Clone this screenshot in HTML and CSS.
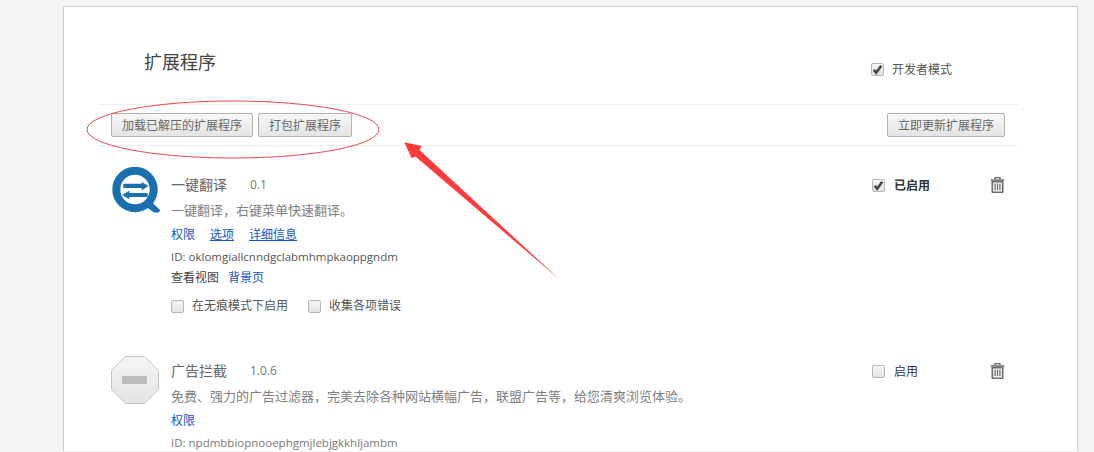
FILE: index.html
```html
<!DOCTYPE html>
<html lang="zh-CN">
<head>
<meta charset="utf-8">
<title>扩展程序</title>
<link rel="stylesheet" href="styles.css">
</head>
<body>
<main class="card">
  <header class="head">
    <h1 class="title">扩展程序</h1>
    <label class="dev"><span class="cb on"><svg viewBox="0 0 14 14"><path d="M3 7.500l2.600 3L11 3" class="tick"/></svg></span><span>开发者模式</span></label>
  </header>
  <div class="toolbar">
    <div class="btns">
      <button class="btn">加载已解压的扩展程序</button>
      <button class="btn">打包扩展程序</button>
    </div>
    <button class="btn">立即更新扩展程序</button>
  </div>
  <section class="item first">
    <svg class="icon" viewBox="0 0 48 48">
      <circle cx="23" cy="22.500" r="18.700" fill="none" stroke="#1a6fae" stroke-width="8"/>
      <path d="M30 37l6-5.500L48 43l-1 2.500h-5z" fill="#1a6fae"/>
      <path d="M11.300 16.800h18.400v-1.800l6.800 4-6.800 4.200v-2.200H11.300zM35.700 26h-18.400v-2.200l-7.200 4.200 7.200 4.200v-2.200h18.400z" fill="#1a6fae"/>
    </svg>
    <div class="info">
      <div class="name"><span class="nm">一键翻译</span><span class="ver">0.1</span></div>
      <div class="desc">一键翻译，右键菜单快速翻译。</div>
      <div class="links"><a class="lnk">权限</a><a class="lnk ul">选项</a><a class="lnk ul">详细信息</a></div>
      <div class="id">ID: oklomgiallcnndgclabmhmpkaoppgndm</div>
      <div class="view"><span>查看视图</span><a class="lnk">背景页</a></div>
      <div class="opts">
        <label class="opt"><span class="cb"></span><span>在无痕模式下启用</span></label>
        <label class="opt"><span class="cb"></span><span>收集各项错误</span></label>
      </div>
    </div>
    <div class="side">
      <label class="en"><span class="cb on"><svg viewBox="0 0 14 14"><path d="M3 7.500l2.600 3L11 3" class="tick"/></svg></span><b>已启用</b></label>
      <svg class="trash" viewBox="0 0 14 16">
        <path d="M4.500 2V1.200Q4.500.500 5.200.500h3.600q.7 0 .7.700V2M.200 3h13.600" class="tr-line"/>
        <path d="M1.800 4.600h10.400V14.500q0 .8-.8.800H2.600q-.8 0-.8-.8z" class="tr-line"/>
        <path d="M4.600 6.500v6.800M7 6.500v6.800M9.400 6.500v6.800" class="tr-bars"/>
      </svg>
    </div>
  </section>
  <section class="item">
    <svg class="icon" viewBox="0 0 48 48">
      <defs><linearGradient id="g" x1="0" y1="0" x2="0" y2="1"><stop offset="0" stop-color="#f5f5f5"/><stop offset="1" stop-color="#e3e3e3"/></linearGradient></defs>
      <path d="M14.500.500h19l14 14v19l-14 14h-19l-14-14v-19z" fill="url(#g)" stroke="#c4c4c4"/>
      <rect x="11" y="20" width="25" height="8" rx="1" fill="#bcbcbc"/>
    </svg>
    <div class="info">
      <div class="name"><span class="nm">广告拦截</span><span class="ver">1.0.6</span></div>
      <div class="desc">免费、强力的广告过滤器，完美去除各种网站横幅广告，联盟广告等，给您清爽浏览体验。</div>
      <div class="links"><a class="lnk">权限</a></div>
      <div class="id">ID: npdmbbiopnooephgmjlebjgkkhljambm</div>
    </div>
    <div class="side">
      <label class="en"><span class="cb"></span><span>启用</span></label>
      <svg class="trash" viewBox="0 0 14 16">
        <path d="M4.500 2V1.200Q4.500.500 5.200.500h3.600q.7 0 .7.700V2M.200 3h13.600" class="tr-line"/>
        <path d="M1.800 4.600h10.400V14.500q0 .8-.8.800H2.600q-.8 0-.8-.8z" class="tr-line"/>
        <path d="M4.600 6.500v6.800M7 6.500v6.800M9.400 6.500v6.800" class="tr-bars"/>
      </svg>
    </div>
  </section>
</main>
<svg class="marks" viewBox="0 0 1094 452">
  <ellipse cx="233" cy="129.500" rx="146" ry="28.500" fill="none" stroke="#f0474c" stroke-width="1"/>
  <path d="M404.300 142.300L421.700 146 419.500 150 559 279 415.500 156.500 411.700 158.300z" fill="#ff3b3b"/>
</svg>
</body>
</html>
```
FILE: styles.css
```css
* { box-sizing: border-box; }
html, body { margin: 0; height: 452px; overflow: hidden; }
body {
  position: relative;
  background: #f4f4f4;
  font-family: "Open Sans", "Noto Sans CJK SC", sans-serif;
  font-size: 12px;
  color: #444;
}
.card {
  margin: 6px 16px 0 63px;
  width: 1015px;
  height: 445px;
  overflow: hidden;
  padding: 0 59px 0 35px;
  background: #fff;
  border: 1px solid #ccc;
  border-bottom: 0;
}
.head {
  height: 97px;
  display: flex;
  justify-content: space-between;
  padding: 41px 0 0 45px;
}
.title {
  margin: 0;
  font-size: 18px;
  font-weight: 400;
  line-height: 28px;
  color: #444;
}
.dev {
  display: flex;
  align-items: center;
  gap: 8px;
  height: 24px;
  margin: 9px 66px 0 0;
  color: #555;
}
.cb {
  flex: none;
  display: block;
  width: 13px;
  height: 13px;
  border: 1px solid #b5b5b5;
  border-radius: 2px;
  background: linear-gradient(#f6f6f6, #e2e2e2);
}
.cb svg { display: block; width: 13px; height: 13px; margin: -1px; }
.tick { fill: none; stroke: #444; stroke-width: 2.800; }
.toolbar {
  height: 42px;
  display: flex;
  align-items: center;
  justify-content: space-between;
  padding: 0 13px 0 12px;
  border-top: 1px solid #eee;
  border-bottom: 1px solid #eee;
}
.btns { display: flex; gap: 5px; }
.btn {
  height: 24px;
  padding: 0 10px;
  font: inherit;
  color: #666;
  border: 1px solid #b0b0b0;
  border-radius: 2px;
  background: linear-gradient(#f7f7f7, #e4e4e4);
}
.item {
  display: flex;
  padding-left: 13px;
  padding-right: 13px;
  margin-top: 46px;
}
.item.first { margin-top: 29px; }
.icon { flex: none; width: 48px; height: 48px; margin: -8px 11px 0 0; }
.item:not(.first) .icon { margin: -5px 12px 0 -1px; }
.info { flex: 1; min-width: 0; }
.name { display: flex; line-height: 20px; font-size: 14px; color: #666; }
.nm { width: 79px; }
.ver { font-size: 12px; color: #777; }
.desc { margin-top: 5px; line-height: 20px; font-size: 13px; color: #808080; }
.links { display: flex; gap: 15px; margin-top: 6px; line-height: 18px; }
.lnk { color: #15c; }
.ul { text-decoration: underline; }
.id { margin-top: 4px; line-height: 18px; font-size: 11.500px; color: #555; }
.item:not(.first) .id { color: #777; }
.view { display: flex; gap: 9px; margin-top: 3px; line-height: 18px; color: #444; }
.opts { display: flex; gap: 20px; margin-top: 10px; line-height: 18px; color: #555; }
.opt { display: flex; align-items: center; gap: 8px; }
.side {
  flex: none;
  width: 133px;
  height: 20px;
  display: flex;
  align-items: center;
  justify-content: space-between;
}
.en { display: flex; align-items: center; gap: 9px; color: #333; }
.en b { font-weight: 700; }
.trash { width: 15px; height: 16px; }
.tr-line { fill: none; stroke: #6d6d6d; stroke-width: 1.700; }
.tr-bars { fill: none; stroke: #6d6d6d; stroke-width: 1.300; }
.marks {
  position: absolute;
  left: 0;
  top: 0;
  width: 1094px;
  height: 452px;
  pointer-events: none;
}
```
